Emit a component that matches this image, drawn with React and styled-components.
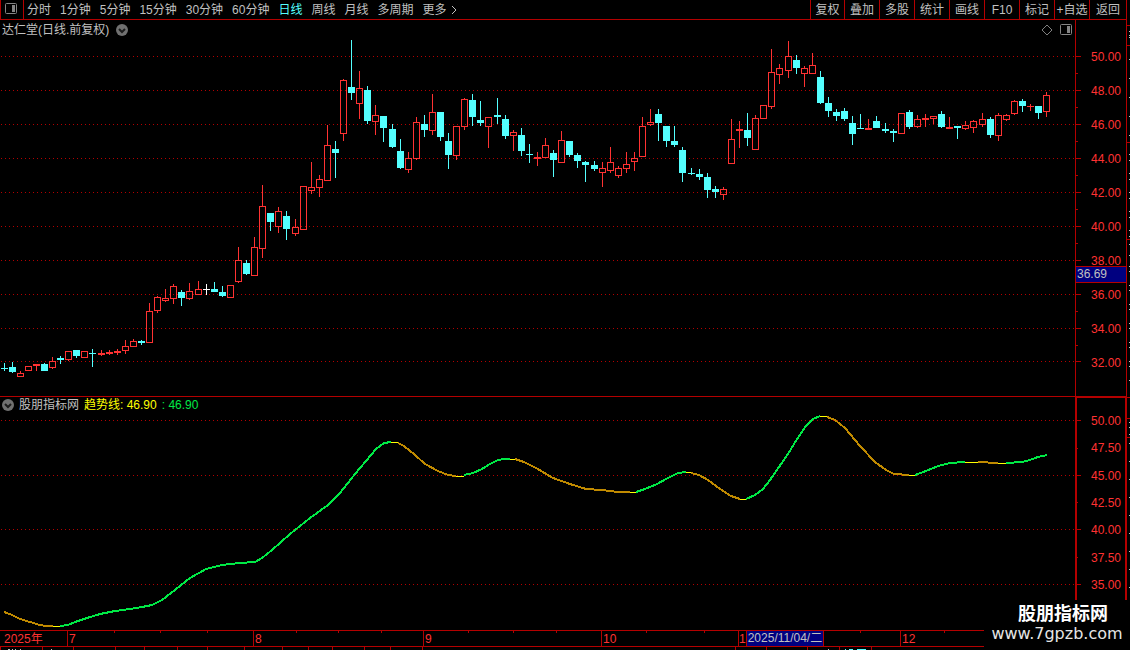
import React, { useState } from 'react';
import styled, { createGlobalStyle } from 'styled-components';

const LINE = '#b40000';
const RED = '#ff3232';
const CYAN = '#54ffff';
const WHITE = '#ffffff';
const GREEN = '#00e946';
const ORANGE = '#c08a00';
const YELLOW = '#ffff00';

const GlobalStyle = createGlobalStyle`
  * {
    box-sizing: border-box;
  }

  body {
    margin: 0;
    background: #000;
    color: #c0c0c0;
    font-family: 'Liberation Sans', 'Noto Sans CJK SC', sans-serif;
    font-size: 12px;
    line-height: 16px;
    overflow: hidden;
  }
`;

const Page = styled.div`
  position: relative;
  display: flex;
  flex-direction: column;
  height: 100vh;
  overflow: hidden;
`;

const Toolbar = styled.div`
  display: flex;
  height: 20px;
  padding-right: 3px;
`;

const ToolbarInner = styled.div`
  flex: 1;
  display: flex;
  border: solid ${LINE};
  border-width: 0 1px 1px;
`;

const BaseButton = styled.button`
  padding: 0;
  border: none;
  background: none;
  color: inherit;
  font: inherit;
  white-space: nowrap;
  cursor: pointer;
`;

const IconButton = styled(BaseButton)`
  display: flex;
`;

const PanelButton = styled(IconButton)`
  width: 23px;
  padding: 2px 3px;
  border-right: 1px solid ${LINE};
`;

const Periods = styled.nav`
  flex: 1;
  display: flex;
  align-items: center;
  gap: 9px;
  padding-left: 3px;
`;

const PeriodButton = styled(BaseButton)`
  display: flex;
  align-items: center;
  gap: 4px;
  color: ${(props) => (props.$active ? CYAN : 'inherit')};
`;

const Tools = styled.div`
  display: flex;
`;

const ToolButton = styled(BaseButton)`
  width: ${(props) => props.$width || 35}px;
  border-left: 1px solid ${LINE};
`;

const Main = styled.div`
  flex: 1;
  display: flex;
  min-height: 0;
`;

const Panes = styled.div`
  flex: 1;
  display: flex;
  flex-direction: column;
  min-width: 0;
`;

const Pane = styled.section`
  flex: ${(props) => props.$grow} 1 0;
  display: flex;
  min-height: 0;
`;

const PlotColumn = styled.div`
  flex: 1;
  display: flex;
  flex-direction: column;
  min-width: 0;
  border-top: ${(props) => (props.$lined ? `1px solid ${LINE}` : 'none')};
`;

const PaneHeader = styled.header`
  display: flex;
  align-items: center;
  height: ${(props) => props.$height}px;
  padding: 0 2px;
  gap: ${(props) => props.$gap}px;
  white-space: nowrap;
`;

const HeaderIcons = styled.div`
  display: flex;
  align-items: center;
  gap: 6px;
  margin-left: auto;
`;

const Value = styled.span`
  color: ${(props) => props.$color};
`;

const Plot = styled.svg`
  display: block;
  flex: 1;
  width: 100%;
  min-height: 0;
`;

const PriceAxis = styled.div`
  position: relative;
  display: flex;
  width: 52px;
  border: solid ${LINE};
  border-width: ${(props) => (props.$bold ? '2px 2px 0' : '0 1px')};
`;

const AxisTicks = styled.svg`
  display: block;
  width: 5px;
  height: 100%;
`;

const AxisLabels = styled.div`
  flex: 1;
  display: flex;
  flex-direction: column;
  padding: ${(props) => props.$padding};
  color: ${RED};
`;

const AxisLabel = styled.span`
  flex: 1;
  display: flex;
  align-items: center;
  justify-content: flex-end;
`;

const PriceBadge = styled.div`
  position: absolute;
  top: 246px;
  left: 0;
  right: 0;
  height: 17px;
  padding-left: 1px;
  line-height: 15px;
  border: solid ${LINE};
  border-width: 1px 0;
  background: #000080;
`;

const SideStrip = styled.svg`
  display: block;
  width: 3px;
  height: 100%;
`;

const TimeAxis = styled.footer`
  display: grid;
  height: 20px;
`;

const TimeTicks = styled.svg`
  grid-area: 1 / 1;
  display: block;
  width: 100%;
  height: 20px;
`;

const Months = styled.div`
  grid-area: 1 / 1;
  display: grid;
  grid-template-columns: 67fr 186fr 170fr 178fr 137fr 162fr 230fr;
  color: ${RED};
`;

const Month = styled.div`
  display: flex;
  align-items: flex-start;
  padding: ${(props) => (props.$first ? '1px 0 0 4px' : '1px 0 0 2px')};
`;

const SelectedMonth = styled(Month)`
  padding-left: 1px;
`;

const DateBadge = styled.span`
  height: 15px;
  padding: 0 1px;
  border: solid ${LINE};
  border-width: 0 1px;
  background: #000080;
  color: #c0c0c0;
  line-height: 14px;
  white-space: nowrap;
`;

const Watermark = styled.div`
  position: absolute;
  right: 0;
  bottom: 0;
  width: 146px;
  height: 50px;
  padding-top: 4px;
  background: #000;
  color: #fff;
  text-align: center;
`;

const WatermarkTitle = styled.div`
  font: bold 18px/21px 'Liberation Sans', 'Noto Sans CJK SC', sans-serif;
  padding-left: 12px;
`;

const WatermarkLink = styled.a`
  display: block;
  color: #e6e6e6;
  font: 16px/18px 'DejaVu Sans', sans-serif;
  text-decoration: none;
`;

const periods = ['分时', '1分钟', '5分钟', '15分钟', '30分钟', '60分钟', '日线', '周线', '月线', '多周期'];

const tools = [
  { label: '复权', width: 34 },
  { label: '叠加' },
  { label: '多股' },
  { label: '统计' },
  { label: '画线' },
  { label: 'F10' },
  { label: '标记' },
  { label: '+自选' },
  { label: '返回', width: 37 },
];

// x, high, body top, body bottom, low, direction (u = up, d = down, f = flat)
const candles = [
  [4, 363, 368, 369, 371, 'd'], [12, 362, 367, 372, 373, 'd'], [20, 371, 373, 377, 377, 'u'],
  [28, 366, 366, 371, 371, 'u'], [36, 364, 364, 366, 371, 'u'], [44, 363, 364, 371, 371, 'd'],
  [52, 357, 361, 368, 369, 'u'], [60, 356, 358, 360, 364, 'd'], [68, 351, 351, 360, 361, 'u'],
  [76, 350, 350, 356, 358, 'd'], [84, 351, 351, 358, 358, 'u'], [92, 349, 353, 354, 367, 'd'],
  [101, 350, 353, 355, 356, 'u'], [109, 350, 352, 354, 355, 'u'], [117, 349, 351, 353, 355, 'u'],
  [125, 340, 346, 351, 354, 'u'], [133, 339, 341, 347, 347, 'u'], [141, 340, 341, 343, 345, 'd'],
  [149, 303, 311, 343, 343, 'u'], [157, 296, 297, 311, 313, 'u'], [165, 289, 298, 301, 302, 'u'],
  [173, 284, 286, 299, 304, 'u'], [181, 290, 292, 298, 306, 'd'], [189, 283, 291, 299, 300, 'u'],
  [198, 281, 289, 295, 295, 'u'], [206, 284, 289, 290, 295, 'f'], [214, 282, 289, 292, 292, 'd'],
  [222, 286, 292, 296, 297, 'd'], [230, 285, 285, 298, 298, 'u'], [238, 247, 260, 282, 283, 'u'],
  [246, 260, 263, 274, 275, 'd'], [254, 237, 247, 276, 276, 'u'], [262, 185, 206, 249, 258, 'u'],
  [270, 213, 213, 222, 231, 'd'], [278, 207, 211, 227, 233, 'u'], [286, 211, 216, 229, 240, 'd'],
  [295, 219, 227, 234, 236, 'u'], [303, 186, 186, 230, 230, 'u'], [311, 162, 187, 191, 194, 'u'],
  [319, 175, 179, 188, 197, 'u'], [327, 125, 145, 181, 181, 'u'], [335, 141, 149, 153, 178, 'd'],
  [343, 79, 80, 134, 141, 'u'], [351, 40, 87, 93, 100, 'd'], [359, 71, 88, 104, 119, 'u'],
  [367, 86, 90, 121, 124, 'd'], [375, 105, 115, 122, 135, 'u'], [383, 116, 116, 128, 142, 'd'],
  [392, 124, 129, 147, 148, 'd'], [400, 139, 151, 168, 169, 'd'], [408, 152, 158, 170, 173, 'u'],
  [416, 117, 122, 159, 160, 'u'], [424, 115, 124, 130, 137, 'd'], [432, 94, 112, 131, 135, 'u'],
  [440, 112, 112, 137, 141, 'd'], [448, 133, 141, 155, 169, 'd'], [456, 126, 126, 156, 160, 'u'],
  [464, 98, 99, 127, 130, 'u'], [472, 94, 100, 117, 126, 'd'], [480, 101, 120, 123, 126, 'd'],
  [488, 117, 117, 127, 148, 'u'], [497, 98, 115, 117, 124, 'd'], [505, 115, 119, 136, 139, 'd'],
  [513, 130, 132, 136, 151, 'u'], [521, 128, 135, 151, 156, 'd'], [529, 144, 154, 155, 163, 'd'],
  [537, 152, 157, 159, 166, 'u'], [545, 138, 145, 158, 158, 'u'], [553, 150, 153, 160, 177, 'd'],
  [561, 131, 140, 163, 163, 'u'], [569, 141, 141, 155, 157, 'd'], [577, 153, 155, 161, 168, 'd'],
  [585, 161, 162, 165, 182, 'd'], [594, 161, 165, 169, 171, 'd'], [602, 162, 168, 173, 187, 'u'],
  [610, 147, 162, 171, 173, 'u'], [618, 166, 168, 176, 178, 'u'], [626, 152, 164, 169, 173, 'u'],
  [634, 152, 158, 162, 171, 'u'], [642, 117, 126, 157, 157, 'u'], [650, 109, 122, 125, 126, 'u'],
  [658, 109, 114, 123, 141, 'd'], [666, 126, 126, 141, 147, 'd'], [674, 126, 141, 145, 147, 'd'],
  [682, 147, 150, 173, 182, 'd'], [691, 168, 173, 174, 175, 'd'], [699, 169, 174, 177, 180, 'd'],
  [707, 173, 177, 190, 198, 'd'], [715, 186, 189, 192, 198, 'd'], [723, 187, 189, 195, 200, 'u'],
  [731, 119, 139, 164, 164, 'u'], [739, 121, 129, 131, 148, 'u'], [747, 113, 130, 138, 146, 'd'],
  [755, 115, 118, 150, 150, 'u'], [763, 105, 105, 119, 119, 'u'], [771, 49, 72, 107, 109, 'u'],
  [779, 64, 68, 75, 84, 'u'], [788, 41, 56, 71, 78, 'u'], [796, 55, 60, 68, 74, 'd'],
  [804, 66, 68, 74, 87, 'u'], [812, 53, 65, 74, 74, 'u'], [820, 71, 77, 103, 104, 'd'],
  [828, 97, 103, 111, 117, 'd'], [836, 109, 112, 116, 121, 'd'], [844, 108, 111, 119, 121, 'd'],
  [852, 116, 123, 134, 145, 'd'], [860, 114, 128, 129, 129, 'd'], [868, 119, 128, 130, 130, 'u'],
  [876, 116, 121, 128, 128, 'd'], [885, 123, 129, 131, 133, 'd'], [893, 129, 131, 133, 142, 'd'],
  [901, 113, 113, 134, 134, 'u'], [909, 110, 112, 127, 129, 'd'], [917, 115, 119, 127, 128, 'u'],
  [925, 114, 118, 120, 127, 'u'], [933, 116, 116, 119, 124, 'u'], [941, 111, 114, 127, 128, 'd'],
  [949, 117, 127, 129, 129, 'u'], [957, 126, 126, 128, 139, 'd'], [965, 121, 125, 129, 130, 'u'],
  [973, 120, 121, 128, 133, 'u'], [982, 113, 119, 125, 127, 'u'], [990, 117, 119, 135, 138, 'd'],
  [998, 113, 115, 136, 141, 'u'], [1006, 114, 115, 120, 121, 'u'], [1014, 100, 101, 114, 115, 'u'],
  [1022, 99, 101, 106, 112, 'd'], [1030, 104, 106, 107, 111, 'u'], [1038, 106, 106, 113, 119, 'd'],
  [1046, 92, 95, 112, 117, 'u'],
];

const trend = [
  { color: ORANGE, points: '4,612 12,615 20,619 30,622 40,625 46,626 53,626' },
  { color: YELLOW, points: '53,626 60,626' },
  {
    color: GREEN,
    points:
      '60,626 68,625 75,622 87,618 100,614 115,611 130,609 142,607 152,605 162,600 175,590 190,578 206,569 222,565 240,563 255,562 262,558 272,550 290,534 310,518 328,505 340,493 355,474 366,461 376,449 384,443 391,442',
  },
  { color: YELLOW, points: '391,442 398,442' },
  { color: ORANGE, points: '398,443 404,446 415,455 425,464 438,471 448,475 456,476' },
  { color: YELLOW, points: '456,476 464,476' },
  { color: GREEN, points: '464,475 473,473 482,469 490,464 498,460 504,459 510,459' },
  { color: YELLOW, points: '510,459 515,459' },
  { color: ORANGE, points: '515,459 524,462 536,468 553,478 570,484 586,489 602,490 618,492 630,492' },
  { color: YELLOW, points: '630,492 636,492' },
  { color: GREEN, points: '636,492 645,489 657,484 668,478 678,473 686,472' },
  { color: YELLOW, points: '686,472 691,472' },
  { color: ORANGE, points: '691,473 699,475 708,480 720,489 731,496 740,499' },
  { color: YELLOW, points: '740,499 746,499' },
  { color: GREEN, points: '746,499 755,495 763,489 770,480 788,454 797,439 806,426 813,419 820,416' },
  { color: YELLOW, points: '820,416 827,416' },
  { color: ORANGE, points: '827,417 835,420 845,428 860,446 875,462 886,470 894,474 909,475' },
  { color: YELLOW, points: '909,475 915,475' },
  { color: GREEN, points: '915,475 926,471 938,466 950,463 965,462' },
  { color: YELLOW, points: '965,462 978,462' },
  { color: ORANGE, points: '978,462 998,463' },
  { color: YELLOW, points: '998,463 1006,463' },
  { color: GREEN, points: '1006,463 1022,462 1030,460 1038,457 1047,455' },
];

const priceLabels = ['50.00', '48.00', '46.00', '44.00', '42.00', '40.00', '38.00', '36.00', '34.00', '32.00'];
const priceLines = [56, 90, 124, 158, 192, 226, 260, 294, 328, 361];
const trendLabels = ['50.00', '47.50', '45.00', '42.50', '40.00', '37.50', '35.00'];
const trendLines = [420, 475, 529, 584];
const trendMinor = [448, 502, 557];

const months = ['2025年', '7', '8', '9', '10'];
const monthLines = [67, 253, 423, 601, 738, 900];
const weekTicks = [114, 160, 207, 296, 338, 381, 468, 513, 556, 646, 704, 782, 860, 944];
const lowerTicks = [0, 42, 73, 115, 144, 177, 207, 244, 282, 308, 332, 364, 390, 422, 735, 766, 807, 839, 871];

const stripLines = [25, 45, 142, 239, 397, 418, 437];
const stripDots = [
  31, 35, 37, 59, 78, 97, 116, 135, 154, 160, 173, 179, 192, 198, 211, 217, 230, 236, 244, 255, 266, 271, 285, 290,
  304, 309, 323, 328, 342, 347, 361, 366, 380, 422, 427, 434, 443, 461, 479, 497, 515, 533, 551, 569, 587,
];

const GridLines = ({ lines }) =>
  lines.map((y) => (
    <line key={y} x1="1" x2="1075" y1={y + 0.5} y2={y + 0.5} stroke={LINE} strokeDasharray="1 3" />
  ));

const Candle = ({ data }) => {
  const [x, high, top, bottom, low, dir] = data;
  const color = { u: RED, d: CYAN, f: WHITE }[dir];
  const hollow = dir === 'u' && bottom - top > 2;

  return (
    <g fill={color}>
      {top > high && <rect x={x} y={high} width="1" height={top - high} />}
      {low > bottom && <rect x={x} y={bottom} width="1" height={low - bottom} />}
      {hollow ? (
        <rect x={x - 2.5} y={top + 0.5} width="6" height={bottom - top - 1} fill="none" stroke={color} />
      ) : (
        <rect x={x - 3} y={top} width="7" height={bottom - top} />
      )}
    </g>
  );
};

const PanelIcon = () => (
  <svg width="14" height="14" viewBox="0 0 14 14" fill="none">
    <rect x="1.5" y="1.5" width="11" height="10" rx="1" stroke="#858585" />
    <rect x="8" y="3" width="3" height="7" fill="#858585" />
  </svg>
);

const DiamondIcon = () => (
  <svg width="12" height="12" viewBox="0 0 12 12" fill="none">
    <path d="M6 1L11 6L6 11L1 6Z" stroke="#808080" />
  </svg>
);

const DropIcon = () => (
  <svg width="12" height="12" viewBox="0 0 12 12" fill="none">
    <circle cx="6" cy="6" r="6" fill="#707070" />
    <path d="M3 5L6 8L9 5" stroke="#1c1c1c" strokeWidth="2" />
  </svg>
);

const App = () => {
  const [period, setPeriod] = useState('日线');

  return (
    <Page>
      <GlobalStyle />
      <Toolbar>
        <ToolbarInner>
          <PanelButton aria-label="侧栏">
            <PanelIcon />
          </PanelButton>
          <Periods>
            {periods.map((name) => (
              <PeriodButton key={name} $active={name === period} onClick={() => setPeriod(name)}>
                {name}
              </PeriodButton>
            ))}
            <PeriodButton>
              更多
              <svg width="7" height="10" viewBox="0 0 7 10" fill="none">
                <path d="M1 1L5 5L1 9" stroke="#c0c0c0" />
              </svg>
            </PeriodButton>
          </Periods>
          <Tools>
            {tools.map((tool) => (
              <ToolButton key={tool.label} $width={tool.width}>
                {tool.label}
              </ToolButton>
            ))}
          </Tools>
        </ToolbarInner>
      </Toolbar>

      <Main>
        <Panes>
          <Pane $grow={376}>
            <PlotColumn>
              <PaneHeader $height={20} $gap={7}>
                <span>达仁堂(日线.前复权)</span>
                <IconButton aria-label="菜单">
                  <DropIcon />
                </IconButton>
                <HeaderIcons>
                  <DiamondIcon />
                  <PanelIcon />
                </HeaderIcons>
              </PaneHeader>
              <Plot viewBox="0 40 1075 356" preserveAspectRatio="none" shapeRendering="crispEdges">
                <GridLines lines={priceLines} />
                {candles.map((candle) => (
                  <Candle key={candle[0]} data={candle} />
                ))}
              </Plot>
            </PlotColumn>
            <PriceAxis>
              <AxisTicks viewBox="0 20 5 376" preserveAspectRatio="none" shapeRendering="crispEdges">
                {priceLines.map((y) => (
                  <g key={y} fill={LINE}>
                    <rect x="0" y={y} width="5" height="1" />
                    {y < 361 && <rect x="0" y={y + 17} width="2" height="1" />}
                  </g>
                ))}
              </AxisTicks>
              <AxisLabels $padding="20px 5px 16px 0">
                {priceLabels.map((label) => (
                  <AxisLabel key={label}>{label}</AxisLabel>
                ))}
              </AxisLabels>
              <PriceBadge>36.69</PriceBadge>
            </PriceAxis>
          </Pane>

          <Pane $grow={234}>
            <PlotColumn $lined>
              <PaneHeader $height={16} $gap={5}>
                <IconButton aria-label="指标菜单">
                  <DropIcon />
                </IconButton>
                <span>股朋指标网</span>
                <Value $color={YELLOW}>趋势线: 46.90</Value>
                <Value $color={GREEN}>: 46.90</Value>
              </PaneHeader>
              <Plot viewBox="0 413 1075 217" preserveAspectRatio="none" shapeRendering="crispEdges">
                <GridLines lines={trendLines} />
                {trend.map((part) => (
                  <polyline
                    key={part.points}
                    points={part.points}
                    fill="none"
                    stroke={part.color}
                    strokeWidth={part.color === YELLOW ? 1 : 2}
                  />
                ))}
              </Plot>
            </PlotColumn>
            <PriceAxis $bold>
              <AxisTicks viewBox="0 398 5 232" preserveAspectRatio="none" shapeRendering="crispEdges">
                {trendLines.map((y) => (
                  <rect key={y} x="0" y={y} width="4" height="1" fill={LINE} />
                ))}
                {trendMinor.map((y) => (
                  <rect key={y} x="0" y={y} width="1" height="1" fill={LINE} />
                ))}
              </AxisTicks>
              <AxisLabels $padding="9px 4px 31px 0">
                {trendLabels.map((label) => (
                  <AxisLabel key={label}>{label}</AxisLabel>
                ))}
              </AxisLabels>
            </PriceAxis>
          </Pane>
        </Panes>
        <SideStrip viewBox="0 20 3 610" preserveAspectRatio="none" shapeRendering="crispEdges">
          {stripLines.map((y) => (
            <rect key={y} x="0" y={y} width="3" height="1" fill={LINE} />
          ))}
          {stripDots.map((y) => (
            <rect key={y} x="2" y={y} width="1" height="1" fill="#c0c0c0" />
          ))}
        </SideStrip>
      </Main>

      <TimeAxis>
        <TimeTicks viewBox="0 630 1130 20" preserveAspectRatio="none" shapeRendering="crispEdges">
          <g fill={LINE}>
            <rect x="0" y="630" width="1130" height="1" />
            <rect x="0" y="646" width="1130" height="1" />
            {monthLines.map((x) => (
              <rect key={x} x={x} y="631" width="1" height="15" />
            ))}
            {weekTicks.map((x) => (
              <rect key={x} x={x} y="631" width="1" height="2" />
            ))}
            {lowerTicks.map((x) => (
              <rect key={x} x={x} y="647" width="1" height="3" />
            ))}
          </g>
          <path d="M8 649.5h2M12 649.5h1M15 649.5h1M20 649.5h1M51 649.5h1M828 649.5h1" stroke="#c0c0c0" />
          <path d="M845 649.5h1M849 649.5h4M857 649.5h9" stroke={CYAN} />
        </TimeTicks>
        <Months>
          {months.map((month, i) => (
            <Month key={month} $first={i === 0}>
              {month}
            </Month>
          ))}
          <SelectedMonth>
            1<DateBadge>2025/11/04/二</DateBadge>
          </SelectedMonth>
          <Month>12</Month>
        </Months>
      </TimeAxis>

      <Watermark>
        <WatermarkTitle>股朋指标网</WatermarkTitle>
        <WatermarkLink href="#">www.7gpzb.com</WatermarkLink>
      </Watermark>
    </Page>
  );
};

export default App;
